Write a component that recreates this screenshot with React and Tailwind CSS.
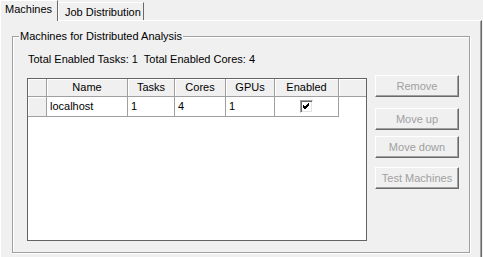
import React from "react";

const hdr =
  "h-full flex items-center justify-center bg-[#f0f0f0] border-r border-b border-[#a0a0a0] shadow-[inset_1px_1px_0_#ffffff] leading-[13px] text-black";
const cell = "h-full flex items-center pl-[3px] bg-white border-r border-b border-[#a0a0a0] leading-[13px] text-black";

function Btn({ children, className = "" }) {
  return (
    <div
      className={
        "h-[22px] w-[84px] flex items-center justify-center bg-[#f0f0f0] border-t border-l border-white border-r border-b border-r-[#696969] border-b-[#696969] shadow-[inset_-1px_-1px_0_#a0a0a0] text-[#a0a0a0] leading-[13px] " +
        className
      }
    >
      {children}
    </div>
  );
}

export default function App() {
  const cols = [
    { w: "w-[81px]", label: "Name", val: "localhost" },
    { w: "w-[47px]", label: "Tasks", val: "1" },
    { w: "w-[51px]", label: "Cores", val: "4" },
    { w: "w-[49px]", label: "GPUs", val: "1" },
  ];
  return (
    <div className="w-[483px] h-[257px] overflow-hidden bg-[#f0f0f0] font-['Liberation_Sans',Arial,sans-serif] text-[11px] text-black">
      <div className="flex h-[21px] relative z-10">
        <div className="w-[58px] h-[21px] bg-[#f0f0f0] border-t border-l border-white border-r border-r-[#696969] pl-[4px] pt-[2px] leading-[13px]">
          Machines
        </div>
        <div className="mt-[2px] w-[86px] h-[18px] border-t border-l border-white border-r border-r-[#696969] pl-[6px] pt-[3px] leading-[13px]">
          Job Distribution
        </div>
      </div>
      <div className="-mt-[1px] relative z-0 w-[482px] h-[240px] border-t border-l border-white border-r border-r-[#696969] shadow-[inset_-1px_0_0_#a0a0a0]">
        <div className="relative ml-[11px] mt-[15px] w-[458px] h-[217px] border border-[#a0a0a0] shadow-[inset_1px_1px_0_#ffffff,1px_1px_0_#ffffff]">
          <span className="absolute left-[6px] top-[-7px] px-[1px] bg-[#f0f0f0] leading-[13px]">
            Machines for Distributed Analysis
          </span>
          <div className="pt-[16px] pl-[15px] leading-[13px]">
            Total Enabled Tasks: 1&nbsp; Total Enabled Cores: 4
          </div>
          <div className="flex mt-[9px] pl-[14px]">
            <div className="mt-[3px] w-[340px] h-[163px] border border-[#646464] bg-white flex flex-col">
              <div className="flex h-[18px]">
                <div className={hdr + " w-[19px]"} />
                {cols.map((c) => (
                  <div key={c.label} className={hdr + " " + c.w}>
                    {c.label}
                  </div>
                ))}
                <div className={hdr + " w-[64px]"}>Enabled</div>
                <div className="h-full w-[27px] bg-[#f0f0f0] border-b border-[#a0a0a0] shadow-[inset_1px_1px_0_#ffffff]" />
              </div>
              <div className="flex h-[20px]">
                <div className="h-full w-[19px] bg-[#f0f0f0] border-r border-b border-[#a0a0a0] shadow-[inset_1px_1px_0_#ffffff]" />
                {cols.map((c) => (
                  <div key={c.label} className={cell + " " + c.w}>
                    {c.val}
                  </div>
                ))}
                <div className="h-full w-[64px] flex items-center justify-center bg-white border-r border-b border-[#a0a0a0]">
                  <div className="w-[13px] h-[13px] bg-white border-t border-l border-[#a0a0a0] border-r border-b border-r-white border-b-white shadow-[inset_1px_1px_0_#696969,inset_-1px_-1px_0_#e3e3e3] flex items-center justify-center">
                    <svg width="9" height="9" viewBox="0 0 9 9">
                      <path d="M1 4 L3 6 L7 2 M1 5 L3 7 L7 3 M1 3 L3 5 L7 1" stroke="#000" strokeWidth="1" fill="none" />
                    </svg>
                  </div>
                </div>
              </div>
            </div>
            <div className="ml-[8px] flex flex-col">
              <Btn>Remove</Btn>
              <Btn className="mt-[11px]">Move up</Btn>
              <Btn className="mt-[6px]">Move down</Btn>
              <Btn className="mt-[9px]">Test Machines</Btn>
            </div>
          </div>
        </div>
      </div>
    </div>
  );
}
